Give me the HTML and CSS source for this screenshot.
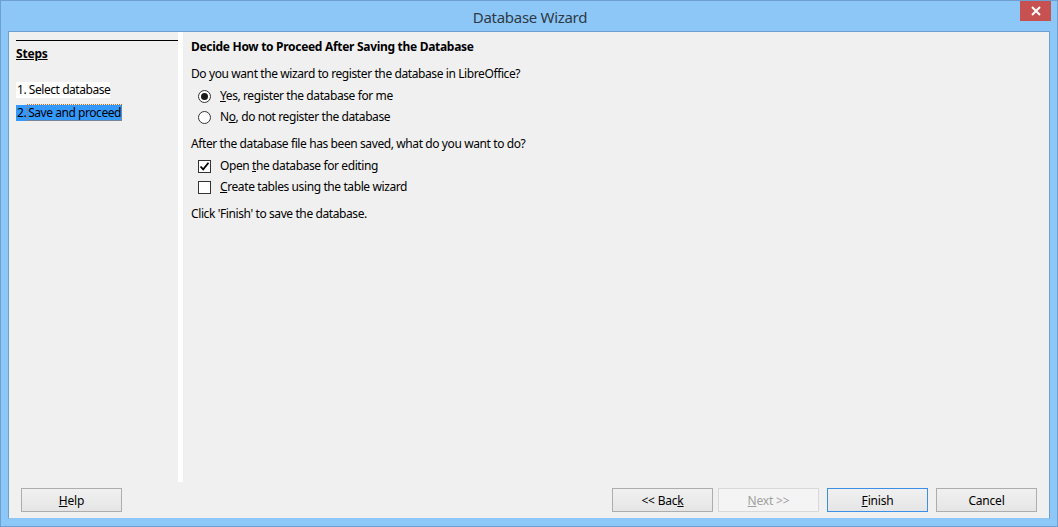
FILE: index.html
```html
<!DOCTYPE html>
<html>
<head>
<meta charset="utf-8">
<link rel="stylesheet" href="styles.css">
</head>
<body>
<div class="window">
  <div class="titlebar">
    <div class="title">Database Wizard</div>
    <div class="close"><svg width="10" height="10" viewBox="0 0 10 10"><path d="M1 1L9 9M9 1L1 9" stroke="#fff" stroke-width="2"/></svg></div>
  </div>
  <div class="client">
    <div class="main">
      <div class="sidebar">
        <div class="steps-head"><span class="steps-title">Steps</span></div>
        <div class="step step-done">1. Select database</div>
        <div class="step step-active">2.<span class="focus">Save and proceed</span></div>
      </div>
      <div class="sep"></div>
      <div class="content">
        <div class="heading">Decide How to Proceed After Saving the Database</div>
        <div class="q q1">Do you want the wizard to register the database in LibreOffice?</div>
        <div class="opt opt-first"><span class="radio checked"></span><span><u>Y</u>es, register the database for me</span></div>
        <div class="opt"><span class="radio"></span><span>N<u>o</u>, do not register the database</span></div>
        <div class="q">After the database file has been saved, what do you want to do?</div>
        <div class="opt opt-first"><span class="check checked"><svg width="11" height="11" viewBox="0 0 11 11"><path d="M1.5 5.5L4.2 8.3L9.5 1.8" fill="none" stroke="#000" stroke-width="1.8"/></svg></span><span>Open <u>t</u>he database for editing</span></div>
        <div class="opt"><span class="check"></span><span><u>C</u>reate tables using the table wizard</span></div>
        <div class="q">Click 'Finish' to save the database.</div>
      </div>
    </div>
    <div class="footer">
      <button class="btn"><u>H</u>elp</button>
      <div class="spacer"></div>
      <button class="btn">&lt;&lt; Bac<u>k</u></button>
      <button class="btn btn-disabled gap5"><u>N</u>ext &gt;&gt;</button>
      <button class="btn btn-default gap8"><u>F</u>inish</button>
      <button class="btn gap8">Cancel</button>
    </div>
  </div>
</div>
</body>
</html>
```
FILE: styles.css
```css
* { box-sizing: border-box; }
html, body { margin: 0; padding: 0; }
body {
  width: 1058px;
  height: 527px;
  overflow: hidden;
  font-family: "Noto Sans", "Open Sans", sans-serif;
  font-size: 12px;
  color: #000;
}
.window {
  width: 1058px;
  height: 527px;
  background: #8cc7f8;
  border: 1px solid #6f9fd0;
  display: flex;
  flex-direction: column;
  padding: 0 7px 7px 7px;
}
.titlebar {
  height: 30px;
  position: relative;
  display: flex;
  align-items: center;
  justify-content: center;
}
.title {
  font-size: 15px;
  color: #2f3a46;
  letter-spacing: -0.3px;
  margin-top: 2px;
  margin-left: 2px;
}
.close {
  position: absolute;
  right: -1px;
  top: 0;
  width: 31px;
  height: 20px;
  background: #c75050;
  display: flex;
  align-items: center;
  justify-content: center;
}
.client {
  flex: 1;
  background: #f0f0f0;
  border: 1px solid #6f9fd0;
  border-bottom-color: #8cc7f8;
  display: flex;
  flex-direction: column;
}
.main {
  height: 450px;
  display: flex;
}
.sidebar {
  width: 168px;
  padding-left: 7px;
  padding-top: 8px;
}
.steps-head {
  width: 165px;
  border-top: 1px solid #000;
  padding-top: 5px;
  height: 42px;
  line-height: 16px;
}
.steps-title {
  font-weight: bold;
  text-decoration: underline;
  letter-spacing: -0.2px;
}
.step {
  display: block;
  height: 16px;
  line-height: 16px;
  padding: 0 1px;
  white-space: nowrap;
  letter-spacing: -0.45px;
}
.step-done {
  background: #fff;
  width: 94px;
  margin-bottom: 7px;
}
.step-active {
  background: #3399ff;
  width: 106px;
}
.focus {
  margin-left: 1px;
  padding: 0 1px 0 1px;
  outline: 1px dotted #c07030;
  outline-offset: -1px;
}
.sep {
  width: 5px;
  background: #fff;
  margin-left: 1px;
}
.content {
  flex: 1;
  padding-left: 8px;
  padding-top: 7px;
  letter-spacing: -0.4px;
  white-space: nowrap;
}
.heading {
  font-weight: bold;
  line-height: 16px;
  height: 16px;
  letter-spacing: -0.3px;
}
.q {
  line-height: 16px;
  height: 16px;
  margin-top: 11px;
}
.opt {
  display: flex;
  align-items: center;
  height: 16px;
  line-height: 16px;
  margin-top: 5px;
  padding-left: 7px;
}
.opt-first { margin-top: 6px; }
.radio {
  width: 13px;
  height: 13px;
  border: 1px solid #333;
  border-radius: 50%;
  background: #fff;
  margin-right: 9px;
  display: flex;
  align-items: center;
  justify-content: center;
}
.radio.checked::after {
  content: "";
  width: 7px;
  height: 7px;
  border-radius: 50%;
  background: #1a1a1a;
}
.check {
  width: 13px;
  height: 13px;
  border: 1px solid #333;
  background: #fff;
  margin-right: 9px;
  display: flex;
  align-items: center;
  justify-content: center;
}
.footer {
  flex: 1;
  display: flex;
  align-items: flex-start;
  padding: 6px 12px 0 12px;
}
.spacer { flex: 1; }
.btn {
  width: 101px;
  height: 24px;
  font-family: inherit;
  font-size: 12px;
  letter-spacing: -0.2px;
  color: #000;
  border: 1px solid #adadad;
  background: linear-gradient(#f0f0f0, #e5e5e5);
  padding: 0;
  margin: 0;
}
.gap5 { margin-left: 5px; }
.gap8 { margin-left: 8px; }
.btn-disabled {
  border-color: #d9d9d9;
  background: #f4f4f4;
  color: #a0a0a0;
}
.btn-default {
  border-color: #3c8ee6;
}
```
